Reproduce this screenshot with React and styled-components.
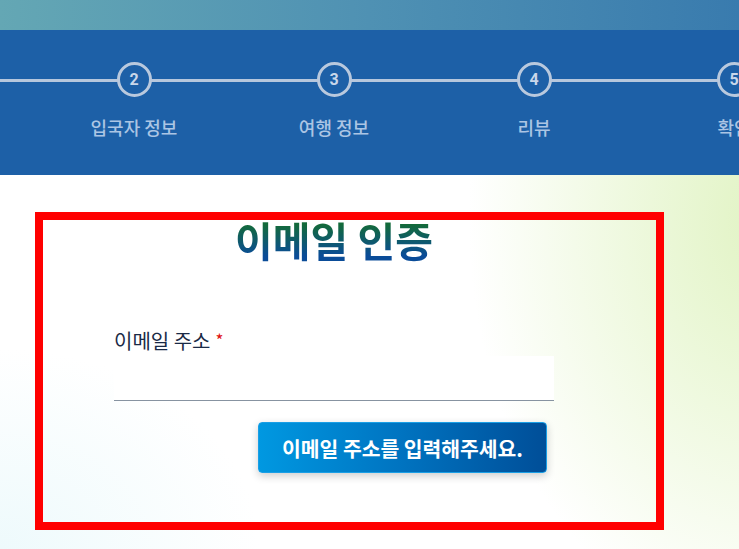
import React from "react";
import styled, { createGlobalStyle } from "styled-components";

const Global = createGlobalStyle`
  html, body { margin: 0; padding: 0; }
  body {
    font-family: "Noto Sans CJK KR", "Noto Sans", sans-serif;
    overflow: hidden;
  }
  #root { min-height: 100vh; display: flex; flex-direction: column; }
`;

const Page = styled.div`
  flex: 1;
  display: flex;
  flex-direction: column;
  overflow: hidden;
`;

const TopBand = styled.div`
  height: 30px;
  background: linear-gradient(90deg, #64a7b4 0%, #4f91b3 50%, #397bae 100%);
`;

const Header = styled.header`
  height: 145px;
  background: #1d60a7;
  overflow: hidden;
`;

const StepRow = styled.ol`
  position: relative;
  list-style: none;
  margin: 0 0 0 -166px;
  padding: 32px 0 0;
  width: 1000px;
  display: flex;
  &::before {
    content: "";
    position: absolute;
    left: 0;
    right: 0;
    top: 49px;
    height: 3px;
    background: #b6c7dd;
  }
`;

const Step = styled.li`
  flex: 1;
  display: flex;
  flex-direction: column;
  align-items: center;
  gap: 19px;
`;

const Circle = styled.span`
  position: relative;
  width: 29px;
  height: 29px;
  border: 3px solid #b9c9de;
  border-radius: 50%;
  background: #1d60a7;
  display: flex;
  align-items: center;
  justify-content: center;
  color: #c9d7ea;
  font-family: Roboto, "Noto Sans", sans-serif;
  font-weight: 700;
  font-size: 16px;
`;

const StepLabel = styled.span`
  color: #abc5e4;
  font-size: 18px;
  font-weight: 500;
  line-height: 22px;
  white-space: nowrap;
`;

const Main = styled.main`
  flex: 1;
  padding: 37px 0 0 35px;
  background:
    radial-gradient(ellipse 300px 420px at 104% 12%, #e1f3c3 0%, rgba(228,245,202,0.75) 35%, rgba(255,255,255,0) 100%),
    radial-gradient(ellipse 260px 200px at 0% 100%, #eefafc 0%, rgba(255,255,255,0) 100%),
    #ffffff;
`;

const Frame = styled.section`
  box-sizing: border-box;
  width: 629px;
  height: 318px;
  border: 8px solid #ff0000;
  display: flex;
  overflow: hidden;
`;

const Column = styled.div`
  width: 440px;
  margin-left: 71px;
  display: flex;
  flex-direction: column;
`;

const Title = styled.h1`
  margin: -5px 0 0;
  text-align: center;
  font-size: 41px;
  line-height: 48px;
  font-weight: 700;
  background: linear-gradient(180deg, #136a3a 20%, #0a4c98 85%);
  -webkit-background-clip: text;
  background-clip: text;
  color: transparent;
`;

const Field = styled.div`
  margin-top: 63px;
  display: flex;
  flex-direction: column;
`;

const Label = styled.label`
  font-size: 20px;
  line-height: 28px;
  color: #1a2a46;
`;

const Required = styled.span`
  color: #e01010;
  margin-left: 5px;
  font-size: 17px;
  vertical-align: 2px;
`;

const Input = styled.input`
  margin-top: 1px;
  box-sizing: border-box;
  height: 45px;
  width: 100%;
  border: none;
  border-bottom: 1px solid #8793a1;
  background: #ffffff;
  outline: none;
  font-family: inherit;
  font-size: 16px;
  padding: 0 8px;
`;

const Actions = styled.div`
  display: flex;
  justify-content: flex-end;
  padding-right: 7px;
  margin-top: 21px;
`;

const Button = styled.button`
  box-sizing: border-box;
  width: 289px;
  height: 51px;
  border: 1px solid #1a9fe6;
  border-radius: 4px;
  background: linear-gradient(90deg, #0098e1 0%, #0073c0 50%, #004e98 100%);
  box-shadow: 0 3px 8px rgba(0, 0, 0, 0.2);
  color: #ffffff;
  font-family: "Noto Sans CJK KR", sans-serif;
  font-weight: 700;
  font-size: 20.4px;
  cursor: pointer;
`;

const steps = ["고객 정보", "입국자 정보", "여행 정보", "리뷰", "확인"];

export default function App() {
  return (
    <Page>
      <Global />
      <TopBand />
      <Header>
        <StepRow>
          {steps.map((s, i) => (
            <Step key={s}>
              <Circle>{i + 1}</Circle>
              <StepLabel>{s}</StepLabel>
            </Step>
          ))}
        </StepRow>
      </Header>
      <Main>
        <Frame>
          <Column>
            <Title>이메일 인증</Title>
            <Field>
              <Label htmlFor="email">
                이메일 주소<Required>*</Required>
              </Label>
              <Input id="email" type="email" />
            </Field>
            <Actions>
              <Button type="button">이메일 주소를 입력해주세요.</Button>
            </Actions>
          </Column>
        </Frame>
      </Main>
    </Page>
  );
}
